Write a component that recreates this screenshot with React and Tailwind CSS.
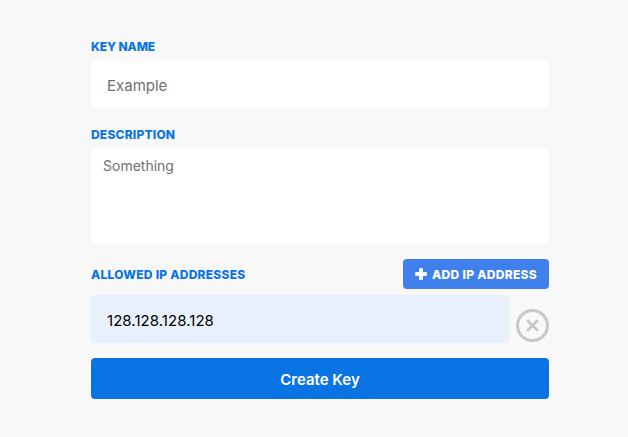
import { Plus, X } from "lucide-react";

const font = "font-['Inter','Liberation_Sans',sans-serif]";

export default function App() {
  return (
    <div className={`min-h-[437px] bg-[#f8f8f8] pt-[40px] pl-[91px] w-[628px] ${font}`}>
      <form className="w-[458px] flex flex-col">
        <label className="h-[20px] text-[12px] leading-[14px] font-extrabold tracking-[-0.1px] text-[#0b74e5]">KEY NAME</label>
        <input
          readOnly
          placeholder="Example"
          className="h-[48px] w-full bg-white rounded-[4px] px-[16px] pt-[2px] text-[15px] text-[#6f6f6f] placeholder:text-[#6f6f6f] outline-none"
        />
        <label className="mt-[20px] h-[20px] text-[12px] leading-[14px] font-extrabold tracking-[0.2px] text-[#0b74e5]">DESCRIPTION</label>
        <textarea
          readOnly
          placeholder="Something"
          className="h-[96px] w-full bg-white rounded-[4px] px-[12px] py-[8px] text-[14px] leading-[20px] text-[#6f6f6f] placeholder:text-[#6f6f6f] outline-none resize-none block"
        />
        <div className="mt-[15px] h-[30px] flex items-center justify-between">
          <span className="pt-[1px] text-[12px] font-extrabold tracking-[0.25px] text-[#0b74e5]">ALLOWED IP ADDRESSES</span>
          <button type="button" className="h-[30px] w-[146px] bg-[#4080ec] rounded-[4px] pl-[8px] text-white text-[12px] font-extrabold tracking-[0.3px] flex items-center gap-[1px]">
            <Plus size={20} strokeWidth={4.5} strokeLinecap="butt" />
            <span className="pt-[1px]">ADD IP ADDRESS</span>
          </button>
        </div>
        <div className="mt-[6px] flex">
          <input
            readOnly
            value="128.128.128.128"
            className="h-[48px] w-[418px] bg-[#e8f0fc] rounded-[4px] px-[16px] pt-[2px] text-[15px] tracking-[0.05px] text-black outline-none"
          />
          <div className="ml-[7px] mt-[14px] w-[33px] h-[33px] rounded-full border-[3px] border-[#c8c8c8] flex items-center justify-center text-[#c8c8c8]">
            <X size={21} strokeWidth={3.2} strokeLinecap="butt" />
          </div>
        </div>
        <button type="button" className="mt-[15px] h-[41px] w-full bg-[#0b74e5] rounded-[4px] pt-[3px] text-white text-[15px] font-semibold">
          Create Key
        </button>
      </form>
    </div>
  );
}
